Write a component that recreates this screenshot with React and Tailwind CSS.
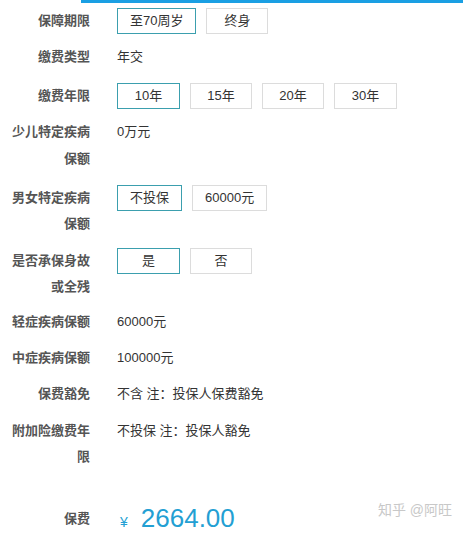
import React from "react";

const font = { fontFamily: '"Microsoft YaHei", "Liberation Sans", "Noto Sans CJK SC", sans-serif' };

function Btn({ children, active, w }) {
  return (
    <div
      className={
        "h-[26px] flex items-center justify-center px-3 text-[13px] text-[#333] bg-white border " +
        (active ? "border-[#3b9fae]" : "border-[#dcdcdc]")
      }
      style={w ? { minWidth: w } : undefined}
    >
      {children}
    </div>
  );
}

function Row({ label, children, className = "" }) {
  return (
    <div className={"flex items-start " + className}>
      <div className="ml-[12px] w-[78px] text-right text-[13px] leading-[26px] font-semibold text-[#555]">
        {label}
      </div>
      <div className="ml-[27px] flex items-center gap-[10px] h-[26px] text-[13px] text-[#333]">
        {children}
      </div>
    </div>
  );
}

export default function App() {
  return (
    <div className="relative w-[463px] h-[533px] bg-white overflow-hidden" style={font}>
      <div className="ml-[81px] h-[3px] bg-[#1a9fe3]" />
      <div className="flex flex-col pt-[5px]">
        <Row label="保障期限">
          <Btn active w={78}>至70周岁</Btn>
          <Btn w={62}>终身</Btn>
        </Row>
        <Row label="缴费类型" className="mt-[10px]">
          <span>年交</span>
        </Row>
        <Row label="缴费年限" className="mt-[13px]">
          <Btn active w={63}>10年</Btn>
          <Btn w={62}>15年</Btn>
          <Btn w={62}>20年</Btn>
          <Btn w={63}>30年</Btn>
        </Row>
        <Row label={<>少儿特定疾病<br /><span className="leading-[28px]">保额</span></>} className="mt-[10px]">
          <span>0万元</span>
        </Row>
        <Row label={<>男女特定疾病<br />保额</>} className="mt-[12px]">
          <Btn active w={63}>不投保</Btn>
          <Btn w={75}>60000元</Btn>
        </Row>
        <Row label={<>是否承保身故<br />或全残</>} className="mt-[11px]">
          <Btn active w={63}>是</Btn>
          <Btn w={62}>否</Btn>
        </Row>
        <Row label="轻症疾病保额" className="mt-[9px]">
          <span>60000元</span>
        </Row>
        <Row label="中症疾病保额" className="mt-[10px]">
          <span>100000元</span>
        </Row>
        <Row label="保费豁免" className="mt-[10px]">
          <span>不含 注：投保人保费豁免</span>
        </Row>
        <Row label={<>附加险缴费年<br />限</>} className="mt-[11px]">
          <span>不投保 注：投保人豁免</span>
        </Row>
        <div className="flex items-center mt-[35px]">
          <div className="ml-[12px] w-[78px] text-right text-[13px] leading-[26px] font-semibold text-[#555]">
            保费
          </div>
          <div className="ml-[30px] flex items-baseline text-[#239fd3]">
            <span className="text-[14px]">¥</span>
            <span className="ml-[13px] text-[26px] leading-[26px]">2664.00</span>
          </div>
        </div>
      </div>
      <div className="absolute right-[11px] bottom-[12px] text-[14px] text-[#c8c8c8]">知乎 @阿旺</div>
    </div>
  );
}
